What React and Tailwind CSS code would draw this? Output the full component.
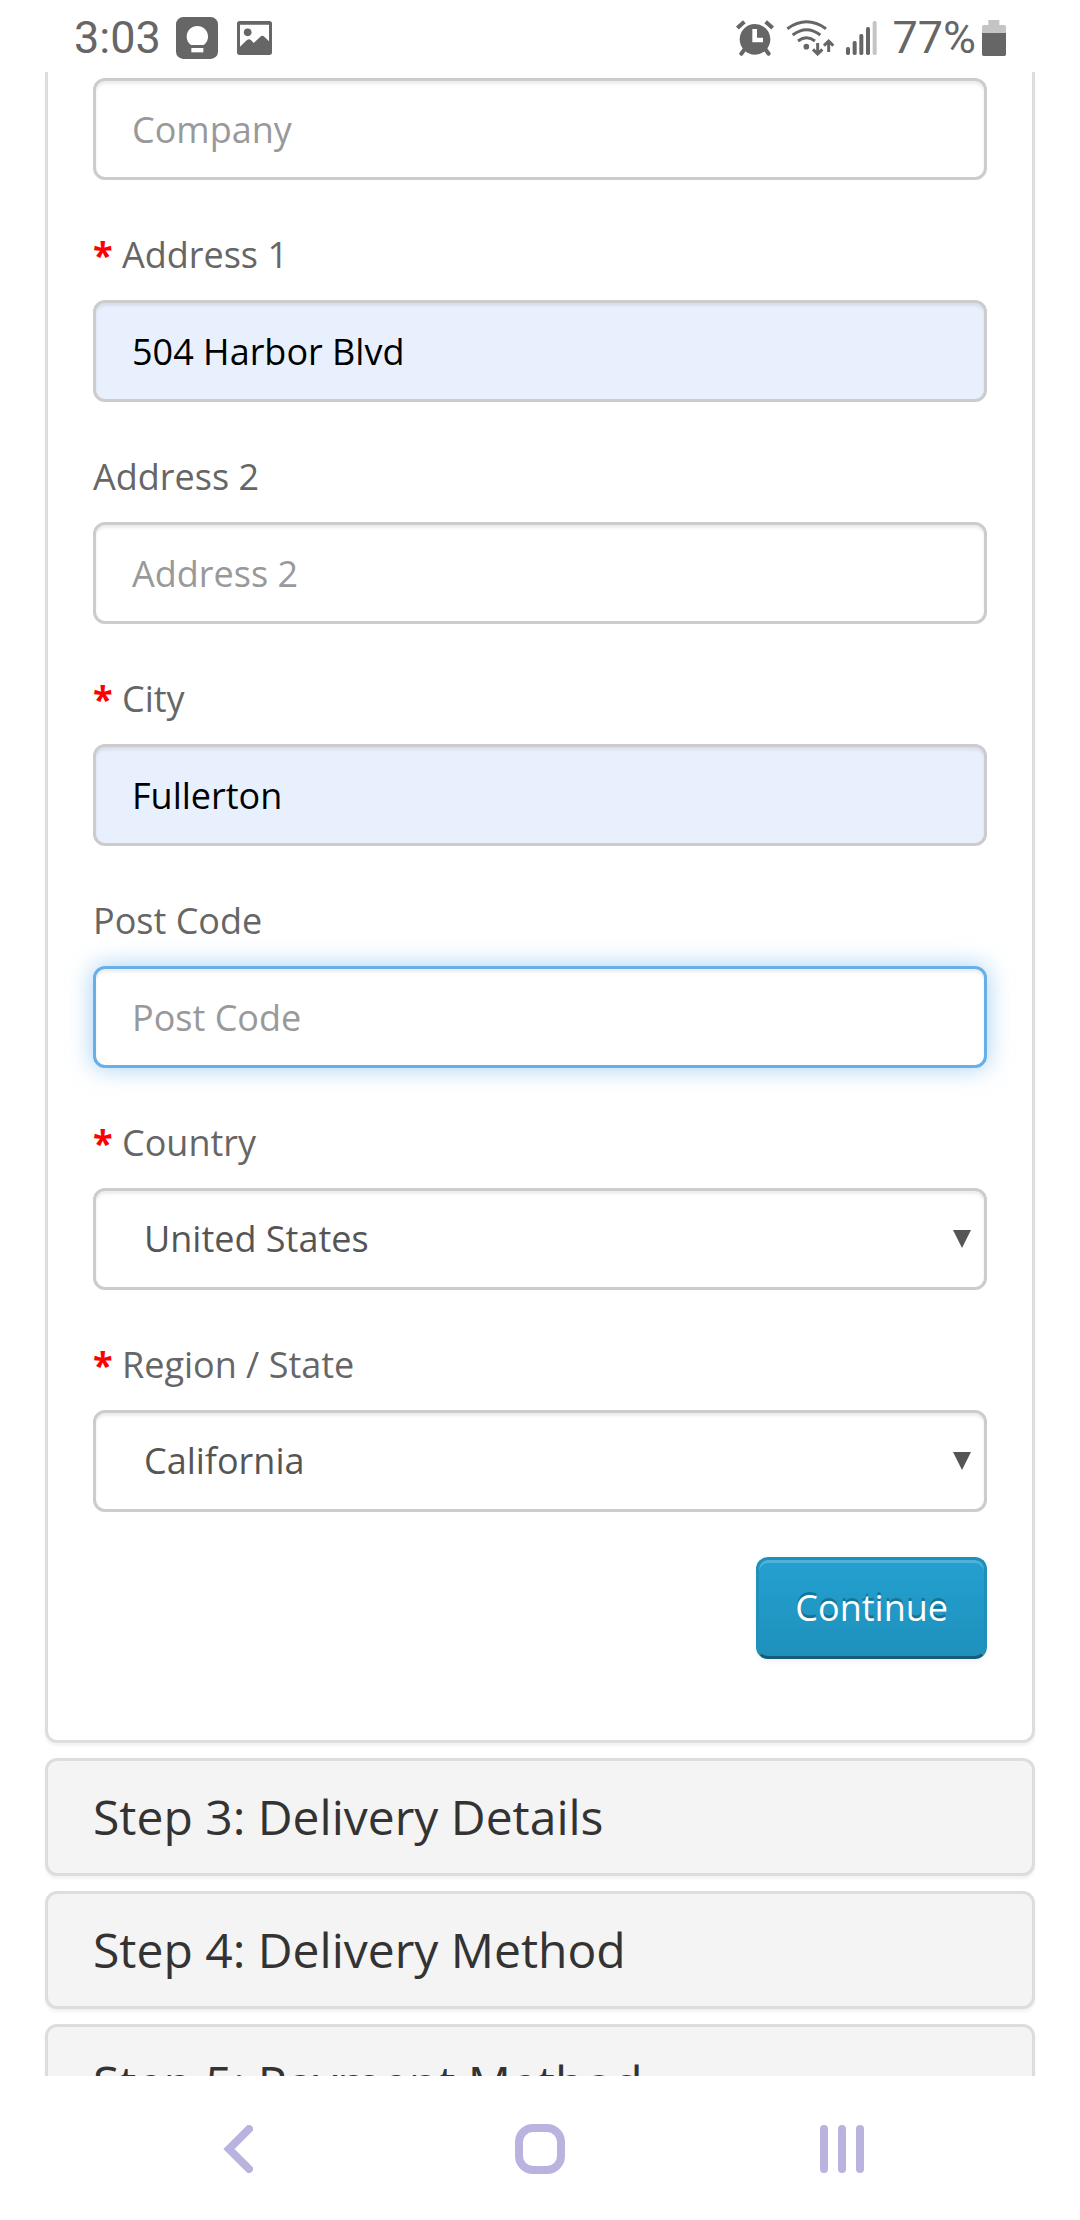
import React from "react";

const controlBase =
  "block h-[102px] w-full rounded-[12px] border-[3px] text-[36px] outline-none placeholder:text-[#999] placeholder:opacity-100";
const plain = "border-[#ccc] bg-white text-[#555] shadow-[inset_0_3px_3px_rgba(0,0,0,0.075)]";
const filled = "border-[#ccc] bg-[#e8f0fe] text-black shadow-[inset_0_3px_3px_rgba(0,0,0,0.075)]";
const active =
  "border-[#66afe9] bg-white text-[#555] shadow-[inset_0_3px_3px_rgba(0,0,0,0.075),0_0_24px_rgba(102,175,233,0.6)]";

function FieldLabel({ id, required, children }) {
  return (
    <label htmlFor={id} className="mb-[15px] block text-[36px] leading-[60px] text-[#666]">
      {required && <span className="font-bold text-[#f00]">* </span>}
      {children}
    </label>
  );
}

function TextField({ id, label, required, value, look = plain }) {
  return (
    <div className="mb-[45px]">
      <FieldLabel id={id} required={required}>{label}</FieldLabel>
      <input id={id} type="text" defaultValue={value} placeholder={label} className={`${controlBase} px-9 ${look}`} />
    </div>
  );
}

function SelectField({ id, label, options }) {
  return (
    <div className="mb-[45px]">
      <FieldLabel id={id} required>{label}</FieldLabel>
      <div className="relative">
        <select id={id} className={`${controlBase} appearance-none px-12 ${plain}`}>
          {options.map((o) => (
            <option key={o}>{o}</option>
          ))}
        </select>
        <svg className="pointer-events-none absolute inset-y-0 right-4 my-auto size-[18px]" viewBox="0 0 18 18" fill="#555" aria-hidden="true">
          <path d="M0 0H18L9 18Z" />
        </svg>
      </div>
    </div>
  );
}

function StepPanel({ title }) {
  return (
    <section className="rounded-[12px] border-[3px] border-[#ddd] bg-[#f4f4f4] px-[45px] py-[30px] shadow-[0_3px_3px_rgba(0,0,0,0.05)]">
      <h4 className="text-[48px] leading-[52px] text-[#333]">{title}</h4>
    </section>
  );
}

function StatusBar() {
  return (
    <header className="flex h-[72px] shrink-0 items-center pt-[3px] pr-[74px] pl-[74px] font-[Roboto,sans-serif] text-[45px] leading-[52px] text-[#666]">
      <span>3:03</span>
      <svg className="ml-[15px] h-[42px] w-[42px]" viewBox="408 48 126 126" aria-hidden="true">
        <rect x="408" y="48" width="126" height="126" rx="22" fill="#666" />
        <path d="M453 132C444 125 440 116 440 107a32 32 0 0 1 64 0c0 9-4 18-13 25Z" fill="#fff" />
        <rect x="454" y="141" width="36" height="13" fill="#fff" />
      </svg>
      <svg className="ml-[19px] h-[34px] w-[35px]" viewBox="591 60 105 102" aria-hidden="true">
        <path
          fillRule="evenodd"
          fill="#666"
          d="M599 60H688a8 8 0 0 1 8 8V154a8 8 0 0 1-8 8H599a8 8 0 0 1-8-8V68a8 8 0 0 1 8-8ZM600 71V137L621 117Q627 112 633 117L641 126 661 107Q667 102 673 107L687 121V71Z"
        />
        <circle cx="623" cy="94" r="11.500" fill="#666" />
      </svg>
      <div className="flex-1" />
      <svg className="h-9 w-[38px]" viewBox="105 57 114 108" fill="none" stroke="#666" aria-hidden="true">
        <circle cx="162" cy="115" r="46" fill="#666" stroke="none" />
        <path d="M109 81L130 62M215 81L194 62" strokeWidth="12" />
        <path d="M131 145L121 158M193 145L203 158" strokeWidth="12" strokeLinecap="round" />
        <path d="M161 84V117H186" stroke="#fff" strokeWidth="14" />
      </svg>
      <svg className="ml-3 h-9 w-12" viewBox="258 57 144 108" fill="none" stroke="#666" strokeWidth="9" aria-hidden="true">
        <path d="M262 83Q320 42 378 83M278 102Q320 70 361 102M294 120Q320 101 345 120" />
        <circle cx="319" cy="137" r="8.500" fill="#666" stroke="none" />
        <path d="M353 126V158M339 145L353 159L367 145M386 153V121M372 134L386 120L400 134" />
      </svg>
      <svg className="ml-3 h-[34px] w-8" viewBox="440 63 96 102" fill="#666" aria-hidden="true">
        <rect x="440" y="141" width="12" height="24" rx="5" />
        <rect x="460" y="123" width="12" height="42" rx="5" />
        <rect x="480" y="102" width="12" height="63" rx="5" />
        <rect x="500" y="81" width="12" height="84" rx="5" />
        <rect x="520" y="63" width="12" height="102" rx="5" fill="#c4c4c4" />
      </svg>
      <span className="ml-[14px]">77%</span>
      <svg className="ml-[6px] h-9 w-6" viewBox="846 57 72 108" aria-hidden="true">
        <path d="M865 57H898V72H913a5 5 0 0 1 5 5V96H846V77a5 5 0 0 1 5-5H865Z" fill="#c4c4c4" />
        <path d="M846 96H918V160a5 5 0 0 1-5 5H851a5 5 0 0 1-5-5Z" fill="#666" />
      </svg>
    </header>
  );
}

function NavBar() {
  return (
    <nav className="grid h-36 shrink-0 grid-cols-3 bg-white px-[87px] pt-[2px]">
      <button type="button" aria-label="Back" className="flex items-center justify-center">
        <svg className="h-12 w-[30px]" viewBox="0 0 30 48" fill="none" stroke="#b9b3e0" strokeWidth="8" strokeLinecap="round" aria-hidden="true">
          <path d="M26 4L6 24L26 44" />
        </svg>
      </button>
      <button type="button" aria-label="Home" className="flex items-center justify-center">
        <svg className="size-[50px]" viewBox="0 0 50 50" fill="none" stroke="#b9b3e0" strokeWidth="8" aria-hidden="true">
          <rect x="4" y="4" width="42" height="42" rx="14" />
        </svg>
      </button>
      <button type="button" aria-label="Recents" className="flex items-center justify-center">
        <svg className="h-12 w-11" viewBox="0 0 44 48" fill="#b9b3e0" aria-hidden="true">
          <rect width="8" height="48" rx="4" />
          <rect x="18" width="8" height="48" rx="4" />
          <rect x="36" width="8" height="48" rx="4" />
        </svg>
      </button>
    </nav>
  );
}

export default function App() {
  return (
    <div className="flex h-screen flex-col bg-white font-['Open_Sans',sans-serif]">
      <StatusBar />
      <main className="flex min-h-0 flex-1 flex-col gap-[15px] overflow-hidden px-[45px]">
        <form
          className="shrink-0 rounded-b-[12px] border-[3px] border-t-0 border-[#ddd] bg-white px-[45px] pt-[6px] pb-[81px] shadow-[0_3px_3px_rgba(0,0,0,0.05)]"
          onSubmit={(e) => e.preventDefault()}
        >
          <input type="text" aria-label="Company" placeholder="Company" className={`${controlBase} mb-[45px] px-9 ${plain}`} />
          <TextField id="address-1" label="Address 1" required value="504 Harbor Blvd" look={filled} />
          <TextField id="address-2" label="Address 2" />
          <TextField id="city" label="City" required value="Fullerton" look={filled} />
          <TextField id="postcode" label="Post Code" look={active} />
          <SelectField id="country" label="Country" options={["United States", "Canada", "Mexico"]} />
          <SelectField id="region" label="Region / State" options={["California", "Nevada", "Oregon"]} />
          <div className="flex justify-end">
            <button
              type="submit"
              className="h-[102px] rounded-[12px] border-[3px] border-[#1f90bb] border-b-[#145e7a] bg-linear-to-b from-[#23a1d1] to-[#1f90bb] bg-origin-border px-9 text-[36px] leading-[60px] text-white shadow-[inset_0_3px_0_rgba(255,255,255,0.2),0_3px_6px_rgba(0,0,0,0.05)] text-shadow-[0_-3px_0_rgba(0,0,0,0.25)]"
            >
              Continue
            </button>
          </div>
        </form>
        <StepPanel title="Step 3: Delivery Details" />
        <StepPanel title="Step 4: Delivery Method" />
        <StepPanel title="Step 5: Payment Method" />
      </main>
      <NavBar />
    </div>
  );
}
